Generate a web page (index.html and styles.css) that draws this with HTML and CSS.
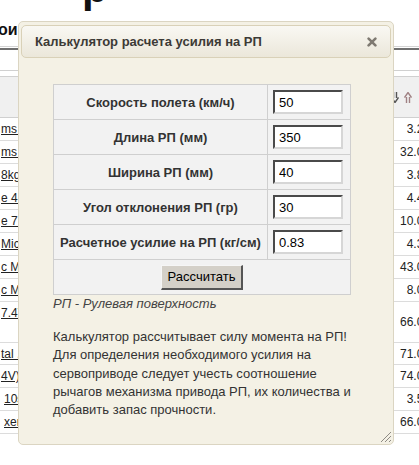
FILE: index.html
```html
<!DOCTYPE html>
<html lang="ru">
<head>
<meta charset="utf-8">
<title>Калькулятор расчета усилия на РП</title>
<link rel="stylesheet" href="styles.css">
</head>
<body>
<div class="page">
  <div class="top">
    <div class="h1">р</div>
    <div class="sub">оив</div>
  </div>
  <div class="list">
    <div class="gap"></div>
    <div class="thin"></div>
    <div class="head">
      <div class="nm"></div>
      <div class="vl sort">
        <svg class="arr" width="8" height="11" viewBox="0 0 8 11"><path d="M2.5 0v6M5.5 0v6M0.5 5.5L4 10.5L7.5 5.5" fill="none" stroke="#555" stroke-width="1.4"/></svg>
        <svg class="arr up" width="8" height="11" viewBox="0 0 8 11"><path d="M2.5 11V5M5.5 11V5M0.5 5.5L4 0.5L7.5 5.5" fill="none" stroke="#a08284" stroke-width="1.4"/></svg>
      </div>
    </div>
    <div class="row"><div class="nm"><a class="lnk">ms 3.2kg</a></div><div class="vl">3.20</div></div>
    <div class="row"><div class="nm"><a class="lnk">ms 32kg</a></div><div class="vl">32.00</div></div>
    <div class="row"><div class="nm"><a class="lnk">8kg</a></div><div class="vl">3.80</div></div>
    <div class="row"><div class="nm"><a class="lnk">е 4.4</a></div><div class="vl">4.40</div></div>
    <div class="row"><div class="nm"><a class="lnk">е 7.4</a></div><div class="vl">10.00</div></div>
    <div class="row"><div class="nm"><a class="lnk">Micro</a></div><div class="vl">4.30</div></div>
    <div class="row"><div class="nm"><a class="lnk">c Mini</a></div><div class="vl">43.00</div></div>
    <div class="row"><div class="nm"><a class="lnk">c Mini</a></div><div class="vl">8.00</div></div>
    <div class="row tall"><div class="nm"><a class="lnk">7.4V</a></div><div class="vl">66.00</div></div>
    <div class="row short"><div class="nm"><a class="lnk">tal .</a></div><div class="vl">71.00</div></div>
    <div class="row"><div class="nm"><a class="lnk">4V)</a></div><div class="vl">74.00</div></div>
    <div class="row"><div class="nm ind"><a class="lnk">10s</a></div><div class="vl">3.50</div></div>
    <div class="row"><div class="nm ind"><a class="lnk">xer</a></div><div class="vl">66.00</div></div>
  </div>

  <div class="dialog">
    <div class="titlebar">
      <span class="title">Калькулятор расчета усилия на РП</span>
      <svg class="close" width="10" height="10" viewBox="0 0 10 10"><path d="M1.6 1.6L8.4 8.4M8.4 1.6L1.6 8.4" stroke="#7f7a72" stroke-width="2.6" stroke-linecap="round"/></svg>
    </div>
    <div class="content">
      <div class="calc">
        <div class="lbl">Скорость полета (км/ч)</div><div class="fld"><input class="inp" type="text" value="50"></div>
        <div class="lbl">Длина РП (мм)</div><div class="fld"><input class="inp" type="text" value="350"></div>
        <div class="lbl">Ширина РП (мм)</div><div class="fld"><input class="inp" type="text" value="40"></div>
        <div class="lbl">Угол отклонения РП (гр)</div><div class="fld"><input class="inp" type="text" value="30"></div>
        <div class="lbl">Расчетное усилие на РП (кг/см)</div><div class="fld"><input class="inp" type="text" value="0.83"></div>
        <div class="act"><button class="btn" type="button">Рассчитать</button></div>
      </div>
      <div class="note">РП - Рулевая поверхность</div>
      <p class="desc">Калькулятор рассчитывает силу момента на РП!<br>Для определения необходимого усилия на сервоприводе следует учесть соотношение рычагов механизма привода РП, их количества и добавить запас прочности.</p>
    </div>
    <svg class="grip" width="13" height="13" viewBox="0 0 13 13"><path d="M12 2L2 12M12 6L6 12M12 10L10 12" stroke="#8e8b84" stroke-width="1"/></svg>
  </div>
</div>
</body>
</html>
```

FILE: styles.css
```css
html, body {
  margin: 0;
  padding: 0;
}
body {
  background: #fff;
  font-family: "Liberation Sans", Arial, sans-serif;
  color: #222;
}
.page {
  position: relative;
  width: 419px;
  height: 465px;
  overflow: hidden;
}
.top {
  height: 79px;
  border-bottom: 1px solid #d4d4d4;
  margin-bottom: 1px;
}
.h1 {
  font-size: 42px;
  font-weight: bold;
  line-height: 42px;
  margin-top: -33px;
  padding-left: 82px;
  color: #111;
}
.sub {
  font-size: 16px;
  font-weight: bold;
  line-height: 20px;
  margin-top: 11px;
  margin-left: -2px;
  color: #111;
}
.list {
  width: 440px;
  border-top: 2px solid #707070;
}
.gap {
  height: 20px;
  border-bottom: 1px solid #d0d0d0;
}
.thin {
  height: 5px;
  border-bottom: 1px solid #d0d0d0;
}
.head {
  height: 40px;
  background: #f0f0f0;
  border-bottom: 1px solid #d0d0d0;
  display: flex;
}
.row {
  display: flex;
  height: 22px;
  border-bottom: 1px solid #dcdcdc;
  font-size: 12px;
}
.row.tall { height: 40px; }
.row.short { height: 21px; }
.nm {
  width: 335px;
  box-sizing: border-box;
  border-right: 1px solid #d0d0d0;
  display: flex;
  align-items: center;
  padding-left: 1px;
  white-space: nowrap;
  overflow: hidden;
}
.nm.ind { padding-left: 4px; }
.row.tall .nm {
  align-items: flex-start;
  padding-top: 4px;
}
.lnk {
  color: #222;
  text-decoration: underline;
}
.vl {
  flex: 1;
  display: flex;
  align-items: center;
  justify-content: flex-end;
  padding-right: 10px;
  color: #222;
}
.sort {
  justify-content: flex-start;
  padding-left: 56px;
  gap: 5px;
}
.arr { display: block; }

.dialog {
  position: absolute;
  left: 18px;
  top: 21px;
  width: 376px;
  height: 424px;
  box-sizing: border-box;
  border: 1px solid #dbd5c2;
  border-radius: 5px;
  background: #f4f1e5;
  padding: 3px 2px 0;
}
.titlebar {
  height: 33px;
  box-sizing: border-box;
  border: 1px solid #d9d1b8;
  border-radius: 5px;
  background: linear-gradient(#f9f8f3, #ebe7da);
  display: flex;
  align-items: center;
  justify-content: space-between;
  padding: 0 13px 0 13px;
}
.title {
  font-size: 13px;
  font-weight: bold;
  color: #3c3a36;
}
.close { display: block; }
.content {
  padding: 26px 32px 0 32px;
}
.calc {
  display: grid;
  grid-template-columns: 213px 82px;
  grid-auto-rows: 34px;
  gap: 1px;
  padding: 1px;
  background: #cfcfcf;
  width: 296px;
}
.lbl {
  background: #f2f2f2;
  display: flex;
  align-items: center;
  justify-content: center;
  font-size: 13px;
  font-weight: bold;
  color: #333;
}
.fld {
  background: #f2f2f2;
  display: flex;
  align-items: center;
  padding-left: 5px;
}
.inp {
  width: 70px;
  height: 24px;
  box-sizing: border-box;
  margin: 0;
  padding: 0 0 0 4px;
  border-style: solid;
  border-width: 2px;
  border-color: #4a4a4a #d6d6d6 #d6d6d6 #4a4a4a;
  background: #fff;
  font-family: "Liberation Sans", Arial, sans-serif;
  font-size: 13px;
  color: #000;
  outline: none;
}
.act {
  grid-column: 1 / span 2;
  background: #f2f2f2;
  display: flex;
  align-items: center;
  justify-content: center;
}
.btn {
  width: 82px;
  height: 25px;
  box-sizing: border-box;
  margin: 0;
  padding: 0;
  background: #d4d0c8;
  border-style: solid;
  border-width: 1px 2px 2px 1px;
  border-color: #f6f6f6 #555 #555 #f6f6f6;
  font-family: "Liberation Sans", Arial, sans-serif;
  font-size: 13px;
  color: #000;
}
.note {
  font-size: 13px;
  font-style: italic;
  line-height: 18px;
  color: #444;
}
.desc {
  margin: 15px 0 0;
  font-size: 13px;
  line-height: 18.3px;
  color: #333;
}
.grip {
  position: absolute;
  right: 1px;
  bottom: 1px;
}
```
